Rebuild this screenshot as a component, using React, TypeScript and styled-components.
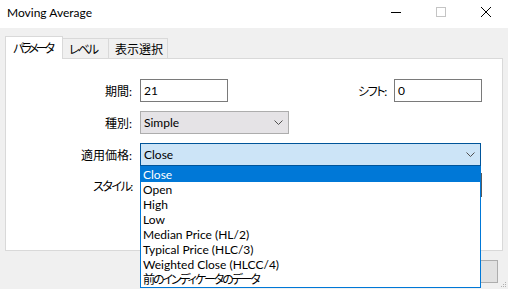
import React from "react";
import styled, { createGlobalStyle, css } from "styled-components";

const Global = createGlobalStyle`
  html, body { margin: 0; padding: 0; background: #f0f0f0; overflow: hidden; }
  body {
    font-family: Lato, "Noto Sans CJK JP", sans-serif;
    font-size: 12px;
    color: #000;
    font-feature-settings: "palt";
  }
`;

const Window = styled.div`
  position: relative;
  width: 508px;
  height: 289px;
  background: #f0f0f0;
  overflow: hidden;
  display: flex;
  flex-direction: column;
`;

const TitleBar = styled.div`
  height: 28px;
  flex: none;
  background: #fff;
  display: flex;
  align-items: center;
`;

const Title = styled.div`
  flex: 1;
  padding-left: 7px;
  font-size: 12px;
  line-height: 28px;
  margin-top: -2px;
`;

const Caption = styled.div`
  display: flex;
  height: 28px;
`;

const CapBtn = styled.div`
  width: 45px;
  height: 28px;
  display: flex;
  align-items: center;
  justify-content: center;
  margin-top: -2px;
`;

const Body = styled.div`
  flex: 1;
  display: flex;
  flex-direction: column;
  padding: 8px 5px 0 5px;
`;

const TabStrip = styled.div`
  display: flex;
  align-items: flex-end;
  height: 22px;
  position: relative;
  z-index: 2;
`;

const Tab = styled.div<{ $active?: boolean; $w: number }>`
  box-sizing: border-box;
  width: ${(p) => p.$w}px;
  height: 20px;
  border: 1px solid #d9d9d9;
  border-bottom: none;
  background: #f0f0f0;
  display: flex;
  align-items: center;
  padding-left: 6px;
  margin-left: -1px;
  white-space: nowrap;
  ${(p) =>
    p.$active &&
    css`
      height: 23px;
      margin-bottom: -1px;
      margin-left: 0;
      background: #fff;
      padding-left: 7px;
      padding-bottom: 1px;
    `}
`;

const Kana = styled.span<{ $ls?: number }>`
  letter-spacing: ${(p) => p.$ls ?? -1.6}px;
`;

const Panel = styled.div`
  box-sizing: border-box;
  height: 193px;
  background: #fff;
  border: 1px solid #d9d9d9;
  padding: 20px 20px 0 0;
  display: flex;
  flex-direction: column;
`;

const Row = styled.div<{ $mt: number }>`
  display: flex;
  align-items: center;
  margin-top: ${(p) => p.$mt}px;
`;

const Label = styled.div<{ $auto?: boolean }>`
  width: ${(p) => (p.$auto ? "auto" : "126px")};
  text-align: right;
  margin-right: 8px;
  white-space: nowrap;
`;

const Spacer = styled.div`
  flex: 1;
`;

const TextBox = styled.div<{ $w: number }>`
  box-sizing: border-box;
  width: ${(p) => p.$w}px;
  height: 23px;
  border: 1px solid #7a7a7a;
  background: #fff;
  padding-left: 3px;
  display: flex;
  align-items: center;
`;

const ComboWrap = styled.div`
  position: relative;
`;

const Combo = styled.div<{ $w: number; $h?: number; $variant: "gray" | "focus" | "dark" }>`
  box-sizing: border-box;
  width: ${(p) => p.$w}px;
  height: ${(p) => p.$h ?? 23}px;
  display: flex;
  align-items: center;
  justify-content: space-between;
  padding: 0 5px 0 3px;
  ${(p) =>
    p.$variant === "gray"
      ? css`
          background: #e5e3e6;
          border: 1px solid #adadad;
        `
      : p.$variant === "focus"
      ? css`
          background: #cce4f7;
          border: 1px solid #005499;
        `
      : css`
          background: #e1e1e1;
          border: 1px solid #5a5a5a;
        `}
`;

const DropList = styled.div`
  position: absolute;
  top: 100%;
  left: 0;
  width: 341px;
  box-sizing: border-box;
  border: 1px solid #0078d7;
  background: #fff;
  z-index: 10;
`;

const Item = styled.div<{ $sel?: boolean }>`
  height: 15px;
  line-height: 15px;
  padding-left: 2px;
  white-space: nowrap;
  background: ${(p) => (p.$sel ? "#0078d7" : "#fff")};
  color: ${(p) => (p.$sel ? "#fff" : "#000")};
`;

const Footer = styled.div`
  display: flex;
  justify-content: flex-end;
  padding: 9px 5px 0 0;
`;

const Button = styled.div`
  box-sizing: border-box;
  width: 75px;
  height: 23px;
  background: #e1e1e1;
  border: 1px solid #adadad;
`;

const Grip = styled.svg`
  position: absolute;
  right: 1px;
  bottom: 1px;
`;

const Chevron = () => (
  <svg width="9" height="5" viewBox="0 0 9 5">
    <polyline points="0.5,0.5 4.5,4.5 8.5,0.5" fill="none" stroke="#505050" strokeWidth="1" />
  </svg>
);

const items = [
  "Close",
  "Open",
  "High",
  "Low",
  "Median Price (HL/2)",
  "Typical Price (HLC/3)",
  "Weighted Close (HLCC/4)",
];

export default function App() {
  return (
    <>
      <Global />
      <Window>
        <TitleBar>
          <Title>Moving Average</Title>
          <Caption>
            <CapBtn>
              <svg width="10" height="1" viewBox="0 0 10 1">
                <rect width="10" height="1" fill="#000" />
              </svg>
            </CapBtn>
            <CapBtn>
              <svg width="10" height="10" viewBox="0 0 10 10">
                <rect x="0.5" y="0.5" width="9" height="9" fill="none" stroke="#c4c4c4" />
              </svg>
            </CapBtn>
            <CapBtn>
              <svg width="10" height="10" viewBox="0 0 10 10">
                <path d="M0 0L10 10M10 0L0 10" stroke="#000" strokeWidth="1" />
              </svg>
            </CapBtn>
          </Caption>
        </TitleBar>
        <Body>
          <TabStrip>
            <Tab $active $w={58}>
              <Kana $ls={-3}>パラメータ</Kana>
            </Tab>
            <Tab $w={47}>
              <Kana $ls={-2}>レベル</Kana>
            </Tab>
            <Tab $w={60}>表示選択</Tab>
          </TabStrip>
          <Panel>
            <Row $mt={0}>
              <Label>期間:</Label>
              <TextBox $w={88}>21</TextBox>
              <Spacer />
              <Label $auto>
                <Kana $ls={-1.3}>シフト:</Kana>
              </Label>
              <TextBox $w={88}>0</TextBox>
            </Row>
            <Row $mt={9}>
              <Label>種別:</Label>
              <Combo $w={149} $variant="gray">
                <span>Simple</span>
                <Chevron />
              </Combo>
            </Row>
            <Row $mt={9}>
              <Label>適用価格:</Label>
              <ComboWrap>
                <Combo $w={341} $variant="focus">
                  <span>Close</span>
                  <Chevron />
                </Combo>
                <DropList>
                  {items.map((t, i) => (
                    <Item key={t} $sel={i === 0}>
                      {t}
                    </Item>
                  ))}
                  <Item>
                    <Kana $ls={-2.1}>前のインディケータのデータ</Kana>
                  </Item>
                </DropList>
              </ComboWrap>
            </Row>
            <Row $mt={7}>
              <Label>
                <Kana $ls={-1.5}>スタイル:</Kana>
              </Label>
              <Combo $w={343} $h={24} $variant="dark" />
            </Row>
          </Panel>
          <Footer>
            <Button />
          </Footer>
        </Body>
        <Grip width="7" height="7" viewBox="0 0 7 7">
          <rect x="5" y="1" width="1" height="1" fill="#b0b0b0" />
          <rect x="3" y="3" width="1" height="1" fill="#b0b0b0" />
          <rect x="5" y="3" width="1" height="1" fill="#b0b0b0" />
          <rect x="1" y="5" width="1" height="1" fill="#b0b0b0" />
          <rect x="3" y="5" width="1" height="1" fill="#b0b0b0" />
          <rect x="5" y="5" width="1" height="1" fill="#b0b0b0" />
        </Grip>
      </Window>
    </>
  );
}
